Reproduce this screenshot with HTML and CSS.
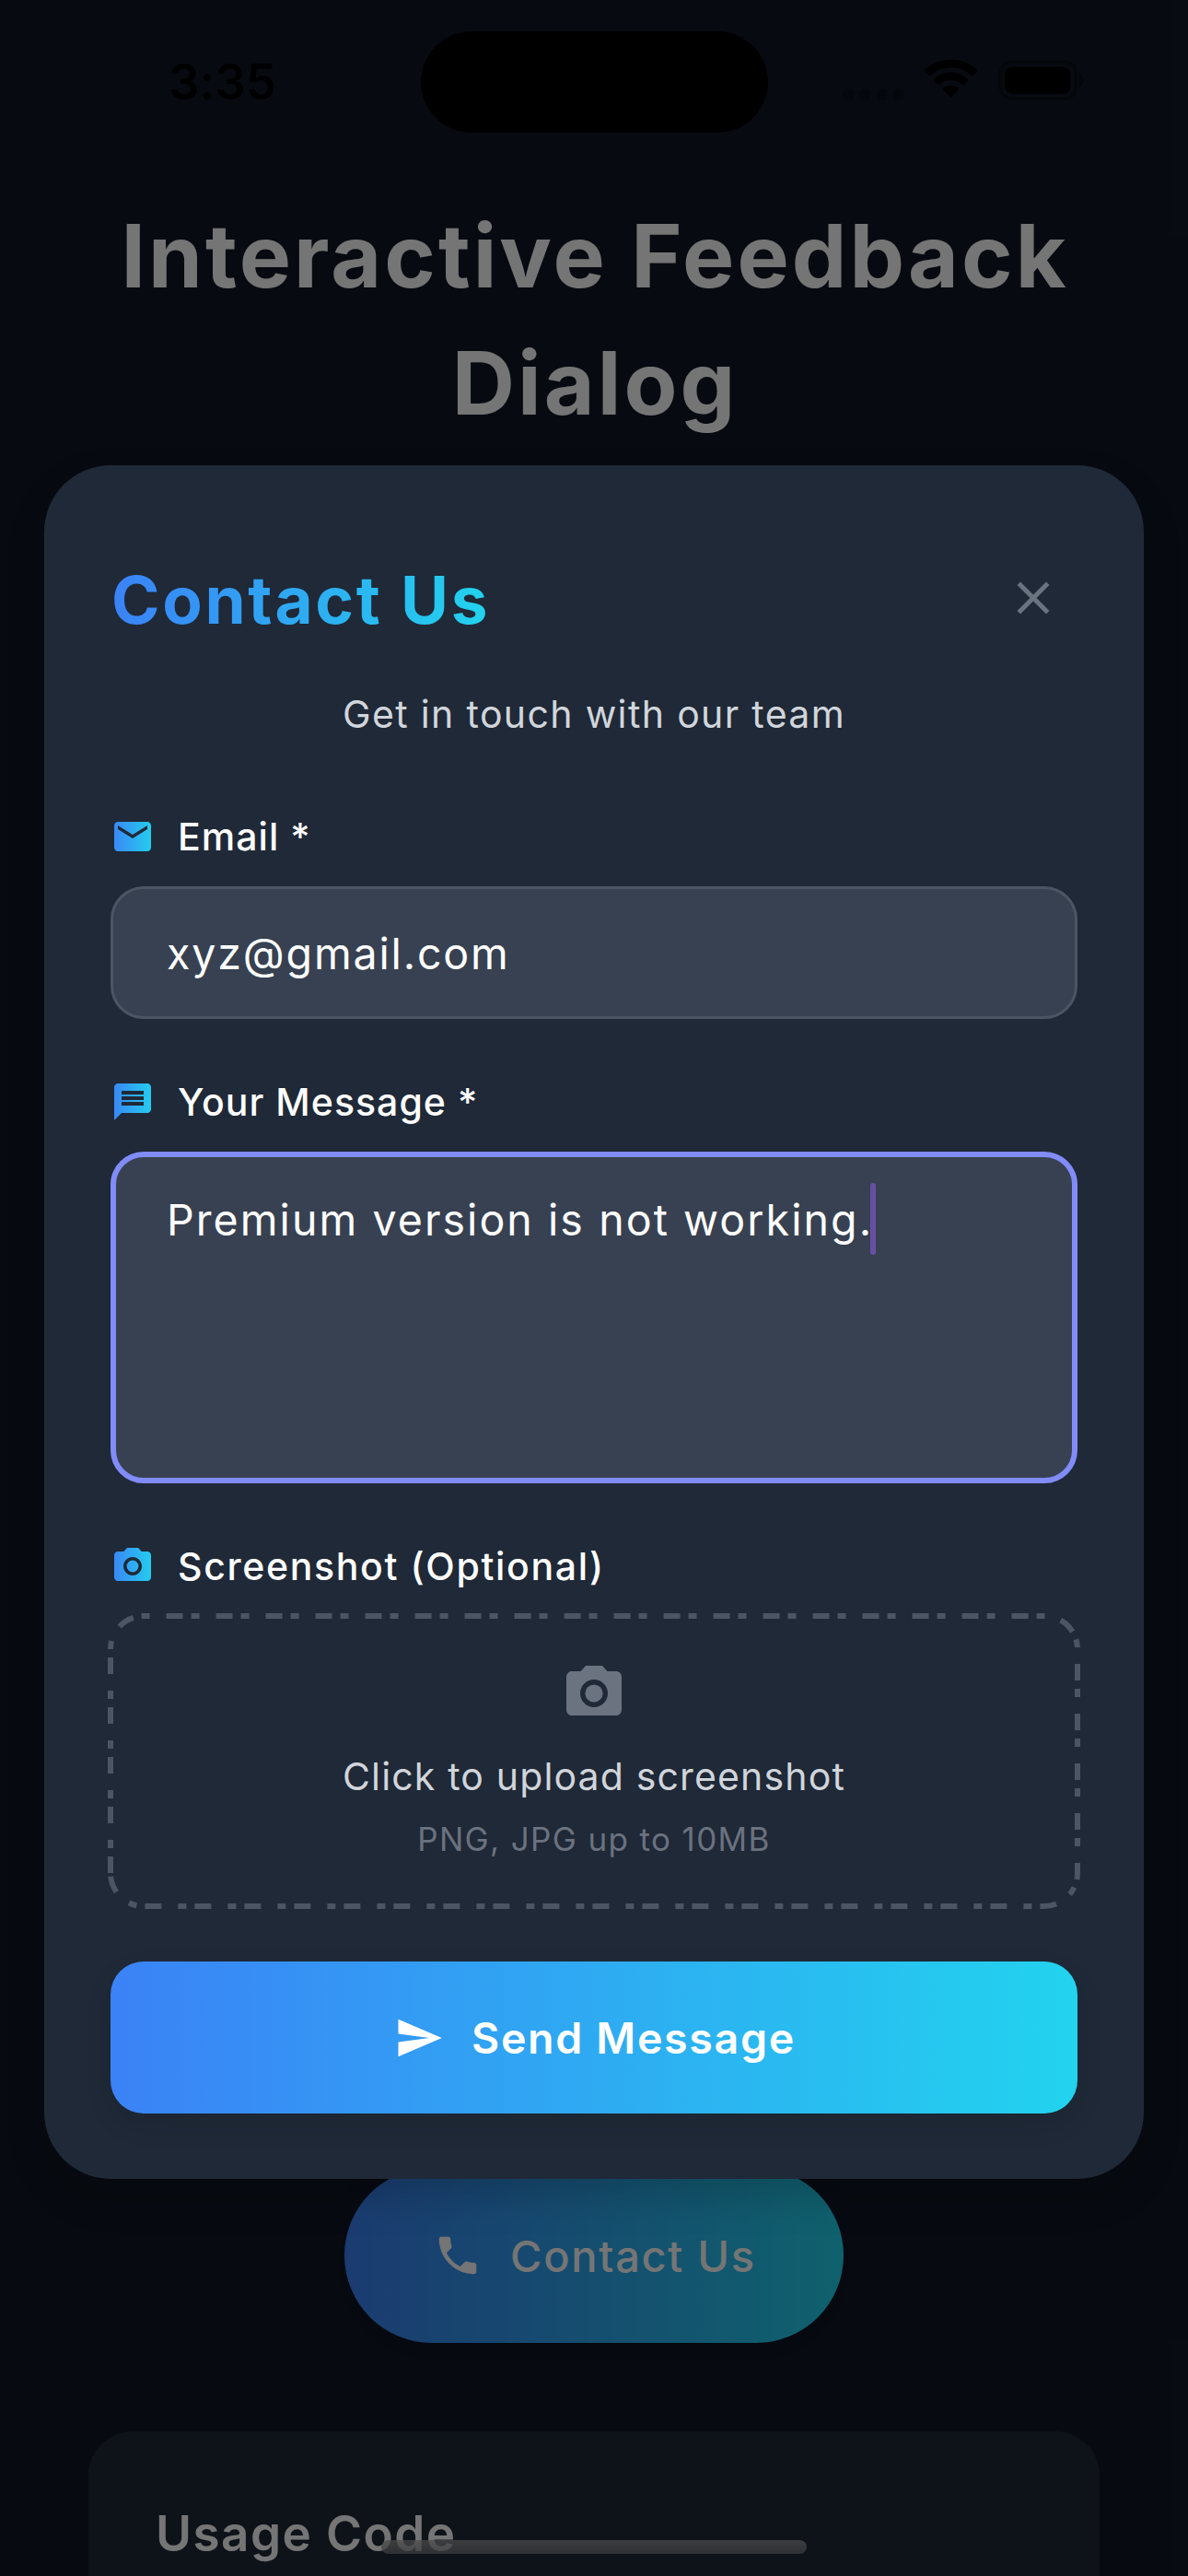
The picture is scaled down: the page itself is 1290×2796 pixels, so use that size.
FILE: index.html
```html
<!DOCTYPE html>
<html lang="en">
<head>
<meta charset="utf-8">
<title>Interactive Feedback Dialog</title>
<link rel="stylesheet" href="styles.css">
</head>
<body>
<div class="screen">
  <header class="status-bar">
    <div class="time">3:35</div>
    <div class="island"></div>
    <svg class="status-icons" width="180" height="50" viewBox="0 0 180 50">
      <g opacity="0.35">
        <rect x="5.5" y="33.5" width="12" height="12" rx="4.5"/>
        <rect x="23.5" y="33.5" width="12" height="12" rx="4.5"/>
        <rect x="41.5" y="33.5" width="12" height="12" rx="4.5"/>
        <rect x="59.5" y="33.5" width="12" height="12" rx="4.5"/>
      </g>
      <path d="M94.5 12.500a41 41 0 0 1 56 0q1.200 1.200 0 2.400l-3.800 3.800q-1.200 1-2.400 0a32 32 0 0 0-43.600 0q-1.200 1-2.400 0l-3.800-3.800q-1.200-1.200 0-2.400z"/>
      <path d="M104.5 22.500a26.500 26.500 0 0 1 36 0q1.200 1.200 0 2.400l-3.800 3.800q-1.200 1-2.400 0a17.500 17.500 0 0 0-23.600 0q-1.200 1-2.400 0l-3.800-3.800q-1.200-1.200 0-2.400z"/>
      <path d="M114.5 32.500a12 12 0 0 1 16 0q1.200 1.200 0 2.400l-6.900 7.200q-1.100 1-2.200 0l-6.900-7.200q-1.200-1.200 0-2.400z"/>
    </svg>
    <svg class="battery" width="96" height="46" viewBox="0 0 96 46">
      <rect x="2.3" y="2.3" width="82" height="39.5" rx="12" fill="none" stroke="#000" stroke-width="3.5" opacity="0.4"/>
      <rect x="7" y="7.5" width="71.5" height="29.5" rx="8"/>
      <path d="M88 15c6.500 2.500 6.500 12 0 14.500z" opacity="0.45"/>
    </svg>
  </header>

  <h1 class="page-title">Interactive Feedback Dialog</h1>

  <button class="contact-button">
    <svg width="54" height="54" viewBox="0 0 24 24" fill="currentColor"><path d="M6.620 10.790c1.440 2.830 3.760 5.140 6.590 6.590l2.200-2.200c.27-.27.67-.36 1.020-.24 1.120.37 2.330.57 3.570.57.55 0 1 .45 1 1V20c0 .55-.45 1-1 1-9.390 0-17-7.610-17-17 0-.55.45-1 1-1h3.500c.55 0 1 .45 1 1 0 1.250.2 2.450.57 3.570.11.35.03.74-.25 1.020l-2.200 2.200z"/></svg>
    <span>Contact Us</span>
  </button>

  <section class="usage-card">
    <h2 class="usage-title">Usage Code</h2>
  </section>

  <div class="scrim"></div>

  <svg class="defs" width="0" height="0">
    <defs>
      <linearGradient id="accent" gradientUnits="userSpaceOnUse" x1="0" y1="0" x2="24" y2="0">
        <stop offset="0" stop-color="#3b82f6"/>
        <stop offset="1" stop-color="#22d3ee"/>
      </linearGradient>
    </defs>
  </svg>

  <div class="dialog" role="dialog">
    <div class="dialog-header">
      <h2 class="dialog-title">Contact Us</h2>
      <button class="close">
        <svg width="60" height="60" viewBox="0 0 24 24" fill="currentColor"><path d="M19 6.410L17.590 5 12 10.590 6.410 5 5 6.410 10.590 12 5 17.590 6.410 19 12 13.410 17.590 19 19 17.590 13.410 12z"/></svg>
      </button>
    </div>
    <p class="subtitle">Get in touch with our team</p>

    <div class="label label-email">
      <svg width="48" height="48" viewBox="0 0 24 24" fill="url(#accent)"><path d="M20 4H4c-1.100 0-1.990.9-1.990 2L2 18c0 1.100.9 2 2 2h16c1.100 0 2-.9 2-2V6c0-1.100-.9-2-2-2zm0 4l-8 5-8-5V6l8 5 8-5v2z"/></svg>
      <span>Email *</span>
    </div>
    <div class="field email">xyz@gmail.com</div>

    <div class="label label-message">
      <svg width="48" height="48" viewBox="0 0 24 24" fill="url(#accent)"><path d="M20 2H4c-1.100 0-1.990.9-1.990 2L2 22l4-4h14c1.100 0 2-.9 2-2V4c0-1.100-.9-2-2-2zm-2 12H6v-2h12v2zm0-3H6V9h12v2zm0-3H6V6h12v2z"/></svg>
      <span>Your Message *</span>
    </div>
    <div class="field message">
      <div class="message-line"><span>Premium version is not working.</span><i class="caret"></i></div>
    </div>

    <div class="label label-screenshot">
      <svg width="48" height="48" viewBox="0 0 24 24" fill="url(#accent)"><circle cx="12" cy="12" r="3.200"/><path d="M9 2L7.170 4H4c-1.100 0-2 .9-2 2v12c0 1.100.9 2 2 2h16c1.100 0 2-.9 2-2V6c0-1.100-.9-2-2-2h-3.170L15 2H9zm3 15c-2.760 0-5-2.240-5-5s2.240-5 5-5 5 2.240 5 5-2.240 5-5 5z"/></svg>
      <span>Screenshot (Optional)</span>
    </div>
    <div class="upload">
      <svg class="upload-outline" width="1050" height="315" viewBox="0 0 1050 315"><path d="M0 279V36A36 36 0 0 1 36 0H1014A36 36 0 0 1 1050 36V279A36 36 0 0 1 1014 315H36A36 36 0 0 1 0 279Z" fill="none" stroke="#4b5563" stroke-width="6" stroke-dasharray="18 9 9 18"/></svg>
      <svg class="upload-icon" width="72" height="72" viewBox="0 0 24 24" fill="#6b7280"><circle cx="12" cy="12" r="3.200"/><path d="M9 2L7.170 4H4c-1.100 0-2 .9-2 2v12c0 1.100.9 2 2 2h16c1.100 0 2-.9 2-2V6c0-1.100-.9-2-2-2h-3.170L15 2H9zm3 15c-2.760 0-5-2.240-5-5s2.240-5 5-5 5 2.240 5 5-2.240 5-5 5z"/></svg>
      <p class="upload-text">Click to upload screenshot</p>
      <p class="upload-hint">PNG, JPG up to 10MB</p>
    </div>

    <button class="send-button">
      <svg width="54" height="54" viewBox="0 0 24 24" fill="currentColor"><path d="M2.010 21L23 12 2.010 3 2 10l15 2-15 2z"/></svg>
      <span>Send Message</span>
    </button>
  </div>

  <div class="home-indicator"></div>
</div>
</body>
</html>
```
FILE: styles.css
```css
* {
  box-sizing: border-box;
  margin: 0;
}

body {
  font-family: Inter, "Liberation Sans", sans-serif;
  background: #000;
}

button {
  border: 0;
  padding: 0;
  font-family: inherit;
  background: none;
}

svg {
  display: block;
  flex: none;
}

.screen {
  position: relative;
  width: 1290px;
  height: 2796px;
  overflow: hidden;
  display: flex;
  flex-direction: column;
  background: #111827;
}

/* Status bar */
.status-bar {
  position: relative;
  z-index: 2;
  height: 177px;
  flex: none;
  display: flex;
  align-items: flex-start;
}

.time {
  width: 274px;
  margin: 58px 0 0 183px;
  font-size: 53px;
  line-height: 62px;
  font-weight: 600;
  letter-spacing: -0.2px;
  color: #000;
}

.island {
  width: 377px;
  height: 110px;
  margin-top: 34px;
  border-radius: 55px;
  background: #000;
}

.status-icons {
  margin: 63px 0 0 76px;
}

.battery {
  margin: 65px 0 0 -6px;
}

/* Page behind the dialog */
.page-title {
  flex: none;
  margin: 32px 70px 0 72px;
  font-size: 94.5px;
  line-height: 138px;
  font-weight: 700;
  letter-spacing: 3.08px;
  text-align: center;
  color: #fff;
}

.contact-button {
  flex: none;
  align-self: center;
  display: flex;
  align-items: center;
  gap: 30px;
  width: 542px;
  height: 190px;
  margin-top: 1868px;
  padding-left: 96px;
  border-radius: 95px;
  background: linear-gradient(90deg, #3b82f6, #22d3ee);
  box-shadow: 0 12px 30px rgba(0, 0, 0, 0.2);
  font-size: 47px;
  font-weight: 500;
  letter-spacing: 1.7px;
  color: #fff;
}

.usage-card {
  flex: 1;
  margin: 96px 96px 0;
  padding: 74px 73px 0;
  border-radius: 48px 48px 0 0;
  background: #1f2937;
}

.usage-title {
  font-size: 53px;
  line-height: 75px;
  font-weight: 600;
  letter-spacing: 1.45px;
  color: #fff;
}

.scrim {
  position: absolute;
  inset: 0;
  z-index: 1;
  background: rgba(0, 0, 0, 0.54);
}

.defs {
  position: absolute;
}

/* Dialog */
.dialog {
  position: absolute;
  z-index: 3;
  left: 48px;
  top: 505px;
  width: 1194px;
  height: 1860px;
  padding: 72px;
  border-radius: 72px;
  background: #1f2937;
  box-shadow: 0 20px 42px rgba(0, 0, 0, 0.17);
}

.dialog-header {
  display: flex;
  align-items: center;
  justify-content: space-between;
  height: 144px;
}

.dialog-title {
  padding: 4px 0 0 1px;
  font-size: 71px;
  line-height: 90px;
  font-weight: 650;
  letter-spacing: 2.7px;
  color: transparent;
  background: linear-gradient(90deg, #3b82f6, #22d3ee);
  -webkit-background-clip: text;
  background-clip: text;
}

.close {
  display: flex;
  align-items: center;
  justify-content: center;
  width: 96px;
  height: 96px;
  color: #6b7280;
}

.subtitle {
  margin: 24px 0 73px;
  font-size: 41px;
  line-height: 60px;
  font-weight: 370;
  letter-spacing: 1.35px;
  text-align: center;
  color: #d1d5db;
}

.label {
  display: flex;
  align-items: center;
  gap: 25px;
  height: 60px;
  margin-bottom: 24px;
  font-size: 41px;
  font-weight: 480;
  color: #fff;
}

.label-email {
  letter-spacing: 1.06px;
}

.label-message {
  letter-spacing: 1.03px;
}

.label-screenshot {
  letter-spacing: 1.65px;
}

.field {
  margin-bottom: 60px;
  border-radius: 36px;
  background: #374151;
  font-size: 46.5px;
  line-height: 72px;
  font-weight: 370;
  letter-spacing: 2.07px;
  color: #fff;
}

.email {
  display: flex;
  align-items: center;
  height: 144px;
  padding: 2px 0 0 58px;
  border: 3px solid #4b5563;
  letter-spacing: 1.85px;
}

.message {
  height: 360px;
  padding: 28px 55px;
  border: 6px solid #818cf8;
}

.message-line {
  display: flex;
  align-items: center;
  height: 78px;
}

.message-line span {
  padding-top: 2px;
}

.caret {
  width: 6px;
  height: 78px;
  margin-left: -3px;
  border-radius: 3px;
  background: #6750a4;
}

.upload {
  position: relative;
  display: flex;
  flex-direction: column;
  align-items: center;
  height: 315px;
  margin-bottom: 60px;
  padding-top: 48px;
}

.upload-outline {
  position: absolute;
  left: 0;
  top: 0;
  overflow: visible;
}

.upload-text {
  margin-top: 24px;
  font-size: 41px;
  line-height: 60px;
  font-weight: 390;
  letter-spacing: 1.15px;
  color: #d1d5db;
}

.upload-hint {
  margin-top: 11px;
  font-size: 35px;
  line-height: 54px;
  font-weight: 370;
  letter-spacing: 1.36px;
  color: #6b7280;
}

.send-button {
  display: flex;
  align-items: center;
  gap: 30.5px;
  width: 100%;
  height: 165px;
  padding-left: 307.5px;
  border-radius: 36px;
  background: linear-gradient(90deg, #3b82f6, #22d3ee);
  box-shadow: 0 12px 30px rgba(0, 0, 0, 0.09);
  font-size: 46.5px;
  font-weight: 600;
  letter-spacing: 1.68px;
  color: #fff;
}

.home-indicator {
  position: absolute;
  z-index: 4;
  left: 414px;
  bottom: 24px;
  width: 462px;
  height: 15px;
  border-radius: 8px;
  background: linear-gradient(rgba(75, 75, 76, 0.75), rgba(58, 58, 60, 0.75));
}
```
